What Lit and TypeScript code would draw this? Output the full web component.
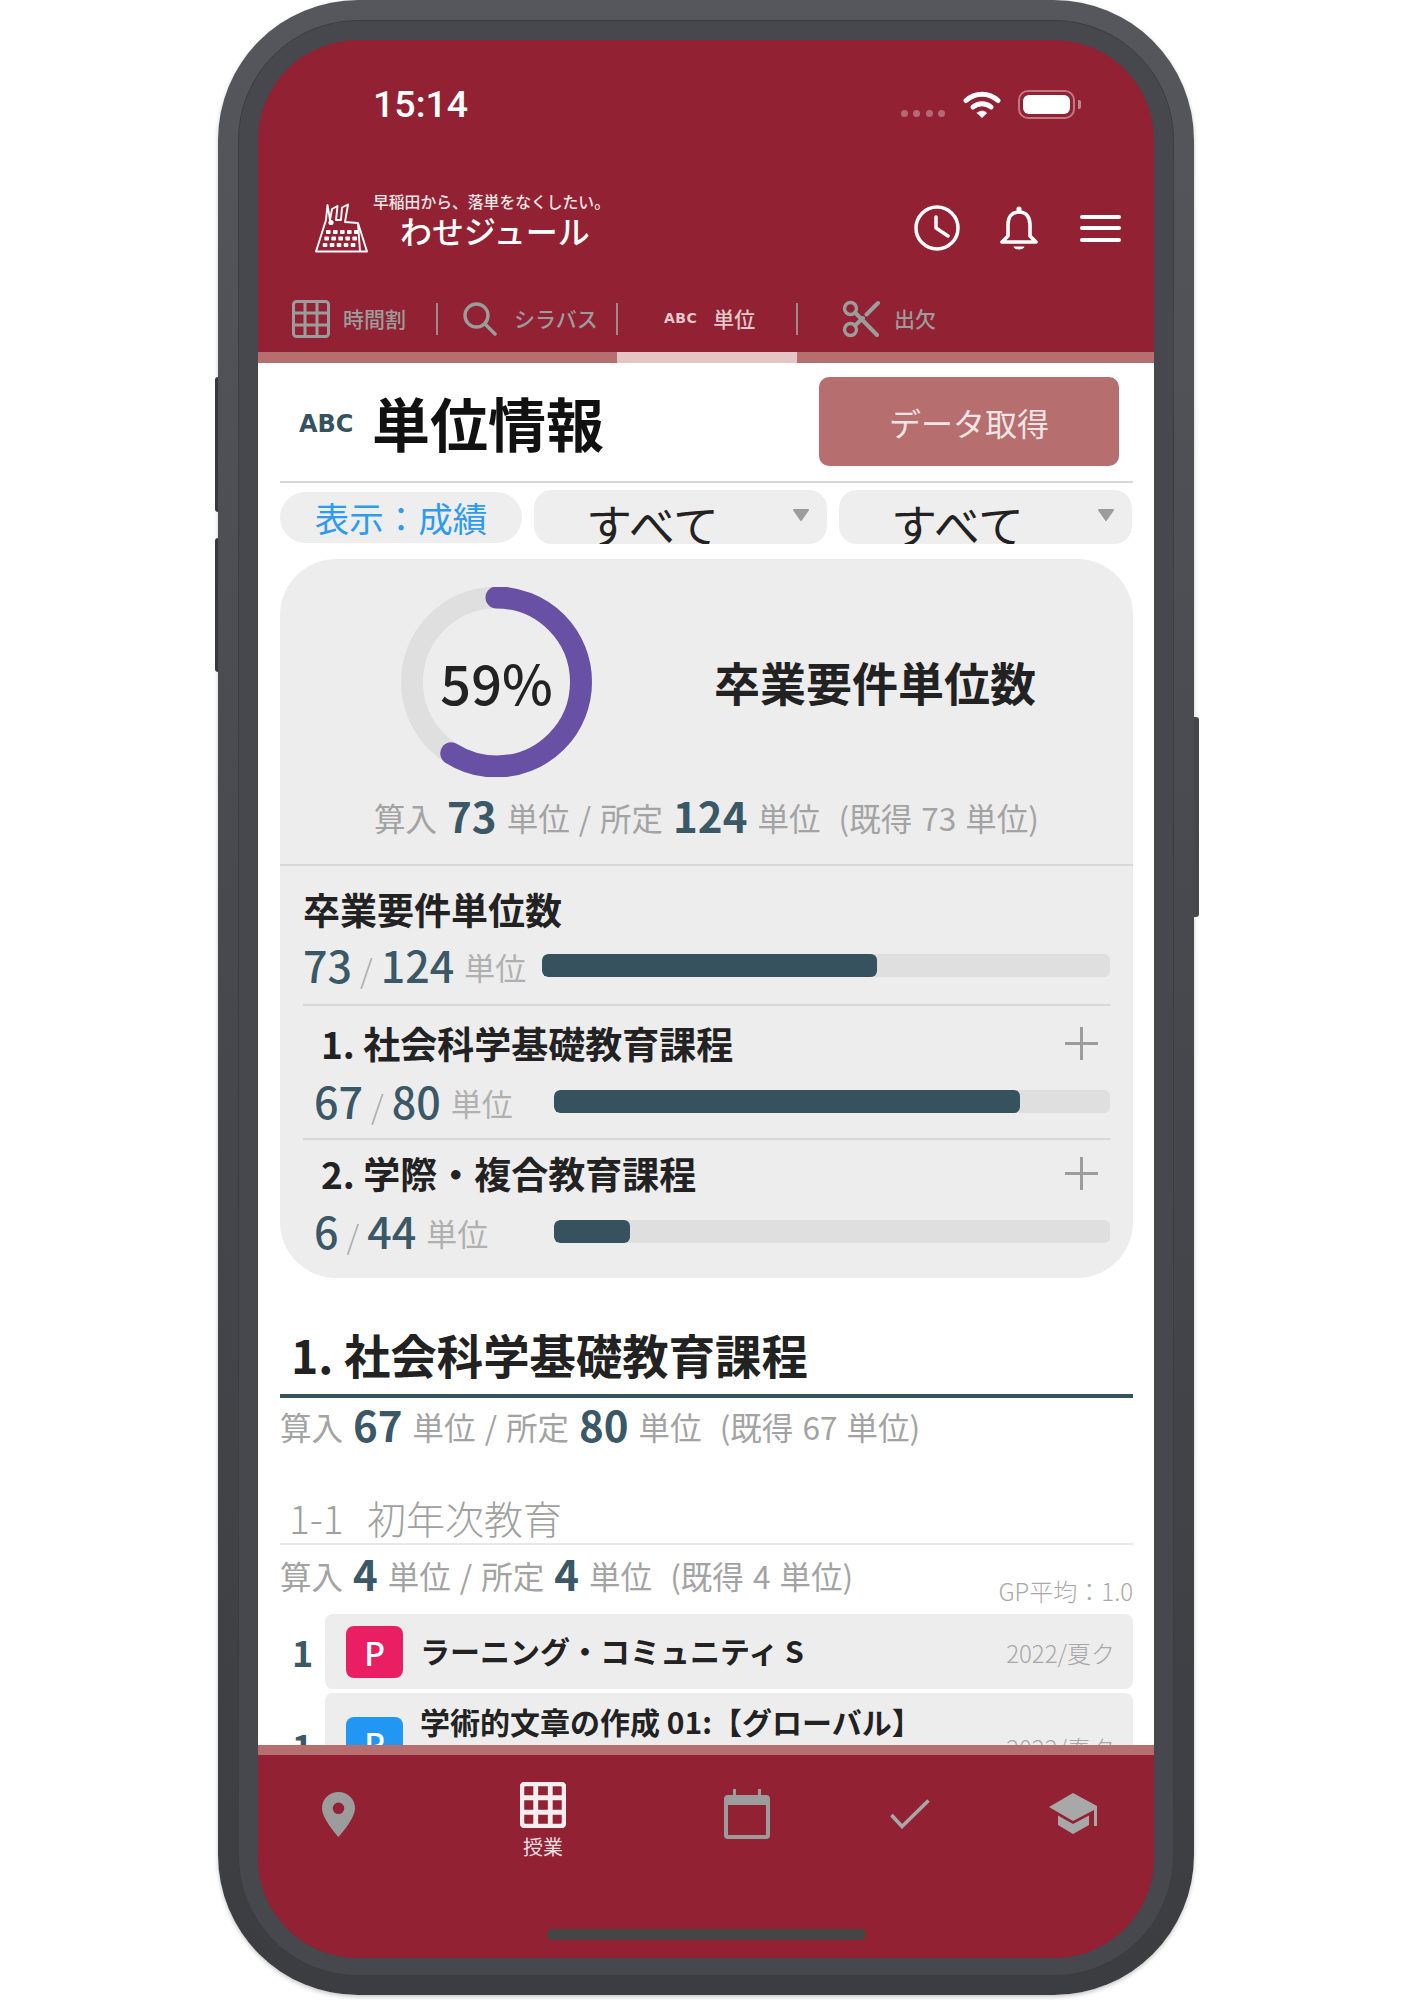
import { LitElement, html, css, svg } from "lit";
import { customElement } from "lit/decorators.js";

const gridIcon = (size: number, color: string, sw: number) => html`<svg width=${size} height=${size} viewBox="0 0 38 38" fill="none" stroke=${color} stroke-width=${sw}>
  <rect x="1.5" y="1.5" width="35" height="35" rx="3"/>
  <path d="M13 1.5V36.5M25 1.5V36.5M1.5 13H36.5M1.5 25H36.5"/></svg>`;

@customElement("app-root")
export class AppRoot extends LitElement {
  static styles = css`
    :host { display: block; width: 1414px; height: 2000px; background: #fff; font-family: "Noto Sans CJK JP", "Noto Sans", sans-serif; color: #222; overflow: hidden; }
    * { box-sizing: border-box; }
    svg { display: block; flex: none; }
    .frame { position: relative; margin-left: 218px; width: 976px; height: 1995px; padding: 20px 20px 19px 20px; border-radius: 140px; background: linear-gradient(180deg, #55575c, #46484d 50%, #3b3d41); box-shadow: 0 2px 4px rgba(0,0,0,.22); }
    .btn { position: absolute; background: #37393d; }
    .b1 { left: -3px; top: 377px; width: 3px; height: 135px; border-radius: 3px 0 0 3px; }
    .b2 { left: -3px; top: 538px; width: 3px; height: 134px; border-radius: 3px 0 0 3px; }
    .b3 { right: -5px; top: 717px; width: 5px; height: 200px; border-radius: 0 3px 3px 0; background: #45474b; }
    .ring { height: 100%; padding: 19px 19px 17px 19px; border: 1px solid #3b3d41; border-radius: 120px; background: #46484d; }
    .screen { height: 100%; border-radius: 100px; overflow: hidden; background: #922233; display: flex; flex-direction: column; }

    .status { height: 130px; flex: none; display: flex; align-items: center; justify-content: space-between; padding: 0 73px 0 115px; }
    .time { color: #fff; font: 500 37.5px/1 Roboto, sans-serif; }
    .sys { display: flex; align-items: flex-start; margin-top: -2px; }
    .dots { display: flex; gap: 5.4px; margin-top: 20px; margin-right: 18px; }
    .dots i { width: 7px; height: 7px; border-radius: 50%; background: rgba(255,255,255,.32); }
    .wifi { margin-right: 17px; }
    .batt { width: 57px; height: 29px; border: 2px solid rgba(255,255,255,.4); border-radius: 10px; padding: 3px; }
    .batt b { display: block; height: 100%; background: #fff; border-radius: 6px; }
    .nub { width: 3px; height: 9px; margin: 10px 0 0 3px; background: rgba(255,255,255,.45); border-radius: 0 2px 2px 0; }

    .hdr { height: 116px; flex: none; display: flex; align-items: center; justify-content: space-between; padding: 0 33px 0 57px; }
    .brand { display: flex; align-items: center; gap: 5px; }
    .brandtxt { display: flex; flex-direction: column; color: #fff; margin-top: -14px; }
    .tag { font-size: 15.8px; line-height: 18px; font-weight: 500; color: #f2e6e6; white-space: nowrap; }
    .name { font-size: 32px; line-height: 40px; font-weight: 500; padding-left: 27px; margin-top: -1px; white-space: nowrap; }
    .acts { display: flex; align-items: center; gap: 40px; }
    .burger { width: 41px; display: flex; flex-direction: column; gap: 7.5px; margin-left: 2px; }
    .burger i { height: 4px; background: #fff; border-radius: 2px; }

    .tabs { height: 66px; flex: none; display: flex; align-items: center; }
    .tab { width: 180px; height: 32px; display: flex; align-items: center; color: #9c9c9c; font-size: 21px; font-weight: 500; white-space: nowrap; }
    .tab span { margin-top: -2px; }
    .tab.sep { border-right: 2px solid #9c8a8d; }
    .t1 { padding-left: 34px; gap: 13px; }
    .t2 { padding-left: 25px; gap: 17px; }
    .t3 { padding-left: 46px; gap: 16px; color: #e3c9cb; }
    .t4 { padding-left: 44px; gap: 14px; }
    .abcs { font: 700 14px/1 "DejaVu Sans", sans-serif; letter-spacing: .5px; }
    .strip { flex: none; height: 11px; display: flex; background: #b76e6f; }
    .strip i { width: 180px; margin-left: 359px; background: #e3c5c6; }

    .content { flex: 1; min-height: 0; overflow: hidden; background: #fff; padding: 0 21px 0 22px; }
    .titlerow { height: 120px; display: flex; align-items: flex-start; border-bottom: 2px solid #d9d6de; padding: 14px 14px 0 19px; }
    .abc { font: 700 24px/1 "DejaVu Sans", sans-serif; color: #36525f; margin-top: 35px; width: 73px; }
    h1 { margin: 3px 0 0; font-size: 58px; line-height: 84px; font-weight: 700; color: #111; flex: 1; }
    .get { width: 300px; height: 89px; border-radius: 10px; background: #b76e6f; color: #f0e4e4; font-size: 32px; display: flex; align-items: center; justify-content: center; }
    .filters { display: flex; height: 54px; margin-top: 7px; gap: 12px; align-items: center; }
    .pill { width: 242px; height: 51px; border-radius: 26px; background: #eee; color: #2f9bf0; font-size: 34.5px; line-height: 51px; text-align: center; white-space: nowrap; }
    .sel { width: 293px; height: 54px; border-radius: 18px; background: #eee; display: flex; align-items: center; justify-content: space-between; padding: 0 17px 0 52px; overflow: hidden; }
    .sel span { font-size: 46px; line-height: 54px; margin-top: 11px; color: #222; }
    .sel svg { margin-bottom: 4px; }

    .card { margin-top: 15px; height: 719px; border-radius: 56px; background: #ededed; overflow: hidden; }
    .donutrow { display: flex; align-items: center; height: 190px; padding-left: 120px; gap: 121px; }
    .donut { position: relative; width: 193px; height: 190px; }
    .pct { position: absolute; inset: 0; display: flex; align-items: center; justify-content: center; font-size: 54px; font-weight: 500; color: #222; padding-bottom: 2px; }
    .bighead { font-size: 46px; font-weight: 700; color: #222; white-space: nowrap; margin-top: -2px; }
    .stats { font-size: 31.5px; line-height: 50px; color: #a3a3a3; white-space: nowrap; word-spacing: 2px; }
    .stats b { font-size: 42px; line-height: 1; font-weight: 700; color: #3a5866; margin: 0 10px; vertical-align: -2px; }
    .center { text-align: center; }
    .top { padding-top: 28px; height: 307px; border-bottom: 2px solid #d9d6de; }
    .top .stats { margin-top: 15px; }
    .goal { padding: 18px 23px 0; }
    .h3 { font-size: 37px; line-height: 50px; font-weight: 700; color: #222; display: flex; justify-content: space-between; align-items: center; white-space: nowrap; }
    .prog { height: 44px; margin-top: 12px; display: flex; align-items: center; }
    .val { font-size: 43px; font-weight: 500; color: #3a5866; line-height: 44px; white-space: nowrap; flex: none; margin-top: -3px; }
    .val s { text-decoration: none; font-size: 32px; font-weight: 300; color: #aaa; margin: 0 8px; }
    .val u { text-decoration: none; font-size: 31px; font-weight: 400; color: #b0b0b0; margin-left: 10px; vertical-align: 3px; }
    .bar { height: 23px; background: #dfdfdf; border-radius: 6px; overflow: hidden; margin-bottom: 5px; margin-left: auto; }
    .bar i { display: block; height: 100%; background: #36525f; border-radius: 6px; }
    .w1 { width: 568px; }
    .w2 { width: 556px; }
    .item { border-top: 2px solid #d9d6de; padding-top: 10px; }
    .first { margin-top: 14px; padding-top: 14px; }
    .item .h3 { padding: 0 12px 0 18px; margin-top: -2px; }
    .item .prog { padding-left: 11px; margin-top: 14px; }
    .item + .item { margin-top: 12px; }

    .sech { margin-top: 46px; padding: 0 0 10px 11px; font-size: 46.4px; line-height: 60px; font-weight: 700; color: #222; border-bottom: 4px solid #36525f; white-space: nowrap; }
    .s2 { margin-top: 3px; }
    .subh { margin-top: 41px; padding: 0 0 1px 9px; font-size: 39px; line-height: 50px; font-weight: 300; color: #a0a0a0; border-bottom: 2px solid #e8e8e8; white-space: pre; word-spacing: 3px; }
    .s3 { display: flex; justify-content: space-between; align-items: flex-end; margin-top: 5px; }
    .gp { font-size: 24px; line-height: 22px; font-weight: 300; color: #a8a8a8; margin-bottom: -2px; }
    .row { display: flex; align-items: center; }
    .r1 { margin-top: 14px; height: 75px; }
    .r2 { margin-top: 4px; height: 100px; }
    .num { width: 45px; text-align: center; font-size: 36px; font-weight: 700; color: #3a5866; flex: none; margin-top: -2px; }
    .rc { flex: 1; height: 100%; background: #ededed; border-radius: 8px; display: flex; align-items: center; padding: 0 18px 0 21px; }
    .badge { width: 57px; height: 52px; flex: none; border-radius: 8px; color: #fff; font-size: 32px; font-weight: 500; display: flex; align-items: center; justify-content: center; margin-right: 17px; }
    .pk { background: #e91e63; }
    .bl { background: #2196f3; }
    .rt { font-size: 30px; line-height: 40px; font-weight: 700; color: #222; white-space: nowrap; flex: 1; margin-bottom: 4px; }
    .r2 .rt { align-self: flex-start; margin: 8px 0 0; }
    .dt { font-size: 24px; font-weight: 300; color: #a8a8a8; white-space: nowrap; margin-top: 2px; }
    .r2 .dt { margin-top: 8px; }
    .r2 .num { margin-top: 4px; }

    .foot { flex: none; height: 213px; border-top: 10px solid #b76e6f; background: #922233; display: flex; flex-direction: column; }
    .nav { display: grid; grid-template-columns: 160px 250px 158px 168px 160px; }
    .nv { display: flex; flex-direction: column; align-items: center; }
    .n1 { padding-top: 37px; }
    .n2 { padding-top: 27px; }
    .n3 { padding-top: 34px; }
    .n4 { padding-top: 44px; }
    .n5 { padding-top: 38px; }
    .lab { font-size: 20px; line-height: 24px; margin-top: 7px; color: #eadfe0; }
    .home { margin: auto auto 18px; width: 319px; height: 11px; border-radius: 6px; background: #454545; }
  `;

  private stats(a: string, b: string, c: string) {
    return html`算入<b>${a}</b>単位 / 所定<b>${b}</b>単位 &nbsp;(既得 ${c} 単位)`;
  }

  private prog(a: string, b: string, pct: number, cls: string) {
    return html`<div class="prog">
      <div class="val">${a}<s>/</s>${b}<u>単位</u></div>
      <div class="bar ${cls}"><i style="width:${pct}%"></i></div>
    </div>`;
  }

  private plus() {
    return html`<svg width="33" height="33" viewBox="0 0 33 33" stroke="#9c9c9c" stroke-width="3"><path d="M16.5 0V33M0 16.5H33"/></svg>`;
  }

  private arrow() {
    return html`<svg width="18" height="12" viewBox="0 0 18 12"><path d="M2 1H16L9 11Z" fill="#9c9c9c" stroke="#9c9c9c" stroke-width="2" stroke-linejoin="round"/></svg>`;
  }

  private logo() {
    const dots = [];
    for (const y of [27, 33.5, 40]) {
      for (const x of [11, 18, 25, 32, 39]) {
        dots.push(svg`<rect x=${x - (y - 27) * 0.25} y=${y} width="4.6" height="4" rx=".8"/>`);
      }
    }
    return html`<svg width="53" height="50" viewBox="0 0 53 50">
      <g fill="none" stroke="#fff" stroke-width="1.9" stroke-linejoin="round">
        <path d="M1 48.5H52L43 20L30 19L33 1.5L27 4.5L26 17L21 17L22.5 3L17 6L15 17L12.5 2L11 17Z"/>
        <path d="M43 20L45 48.5"/>
      </g>
      <circle cx="16" cy="19.5" r="2.6" fill="#fff"/>
      <g fill="#fff">${dots}</g>
    </svg>`;
  }

  render() {
    return html`
      <div class="frame">
        <div class="btn b1"></div><div class="btn b2"></div><div class="btn b3"></div>
        <div class="ring"><div class="screen">
          <div class="status">
            <div class="time">15:14</div>
            <div class="sys">
              <div class="dots"><i></i><i></i><i></i><i></i></div>
              <svg class="wifi" width="38" height="29" viewBox="0 0 38 29" fill="none" stroke="#fff" stroke-width="5" stroke-linecap="round">
                <path d="M3 10.5C12 2 26 2 35 10.5"/>
                <path d="M10 17C15 12.5 23 12.5 28 17"/>
                <path d="M14.5 23L19 27.5L23.5 23C21 20.5 17 20.5 14.5 23Z" fill="#fff" stroke-width="1" stroke-linejoin="round"/>
              </svg>
              <div class="batt"><b></b></div>
              <div class="nub"></div>
            </div>
          </div>

          <div class="hdr">
            <div class="brand">
              ${this.logo()}
              <div class="brandtxt">
                <div class="tag">早稲田から、落単をなくしたい。</div>
                <div class="name">わせジュール</div>
              </div>
            </div>
            <div class="acts">
              <svg width="46" height="46" viewBox="0 0 46 46" fill="none" stroke="#fff" stroke-width="3.5" stroke-linecap="round" stroke-linejoin="round">
                <circle cx="23" cy="23" r="21"/><path d="M22 12V23L34 31"/>
              </svg>
              <svg width="38" height="45" viewBox="0 0 38 45" fill="none" stroke="#fff" stroke-width="3.6" stroke-linejoin="round">
                <path d="M19 6C11 6 8 12 8 19V30L2 36H36L30 30V19C30 12 27 6 19 6Z"/>
                <circle cx="19" cy="3" r="2.6" fill="#fff" stroke="none"/>
                <path d="M13.5 40.5H24.5C24 44.5 14 44.5 13.5 40.5Z" fill="#fff" stroke="none"/>
              </svg>
              <div class="burger"><i></i><i></i><i></i></div>
            </div>
          </div>

          <div class="tabs">
            <div class="tab sep t1">${gridIcon(38, "#9c9c9c", 3)}<span>時間割</span></div>
            <div class="tab sep t2">
              <svg width="34" height="34" viewBox="0 0 34 34" fill="none" stroke="#9c9c9c" stroke-width="3.4" stroke-linecap="round"><circle cx="13.5" cy="13.5" r="11.5"/><path d="M22 22L32 32"/></svg>
              <span>シラバス</span>
            </div>
            <div class="tab sep t3"><span class="abcs">ABC</span><span>単位</span></div>
            <div class="tab t4">
              <svg width="38" height="38" viewBox="0 0 38 38" fill="none" stroke="#9c9c9c" stroke-linecap="round">
                <circle cx="8.5" cy="8.5" r="6" stroke-width="3.4"/><circle cx="8.5" cy="29.5" r="6" stroke-width="3.4"/>
                <path d="M13 12.5L35 35" stroke-width="4"/><path d="M13 25.5L21 18M24.5 14.5L36 3" stroke-width="4"/>
              </svg>
              <span>出欠</span>
            </div>
          </div>
          <div class="strip"><i></i></div>

          <div class="content">
            <div class="titlerow">
              <div class="abc">ABC</div>
              <h1>単位情報</h1>
              <div class="get">データ取得</div>
            </div>
            <div class="filters">
              <div class="pill">表示：成績</div>
              <div class="sel"><span>すべて</span>${this.arrow()}</div>
              <div class="sel"><span>すべて</span>${this.arrow()}</div>
            </div>

            <div class="card">
              <div class="top">
                <div class="donutrow">
                  <div class="donut">
                    <svg width="193" height="190" viewBox="0 0 193 190" fill="none" stroke-width="22">
                      <circle cx="96.5" cy="95" r="84.5" stroke="#dfdfdf"/>
                      <circle cx="96.5" cy="95" r="84.5" stroke="#6850a4" stroke-linecap="round" pathLength="100" stroke-dasharray="59 100" transform="rotate(-90 96.5 95)"/>
                    </svg>
                    <div class="pct">59%</div>
                  </div>
                  <div class="bighead">卒業要件単位数</div>
                </div>
                <div class="stats center">${this.stats("73", "124", "73")}</div>
              </div>
              <div class="goal">
                <div class="h3">卒業要件単位数</div>
                ${this.prog("73", "124", 58.9, "w1")}
                <div class="item first">
                  <div class="h3"><span>1. 社会科学基礎教育課程</span>${this.plus()}</div>
                  ${this.prog("67", "80", 83.75, "w2")}
                </div>
                <div class="item">
                  <div class="h3"><span>2. 学際・複合教育課程</span>${this.plus()}</div>
                  ${this.prog("6", "44", 13.6, "w2")}
                </div>
              </div>
            </div>

            <div class="sech">1. 社会科学基礎教育課程</div>
            <div class="stats s2">${this.stats("67", "80", "67")}</div>
            <div class="subh">1-1  初年次教育</div>
            <div class="s3">
              <div class="stats">${this.stats("4", "4", "4")}</div>
              <div class="gp">GP平均：1.0</div>
            </div>
            <div class="row r1">
              <div class="num">1</div>
              <div class="rc"><div class="badge pk">P</div><div class="rt">ラーニング・コミュニティ S</div><div class="dt">2022/夏ク</div></div>
            </div>
            <div class="row r2">
              <div class="num">1</div>
              <div class="rc"><div class="badge bl">P</div><div class="rt">学術的文章の作成 01:【グローバル】</div><div class="dt">2022/春ク</div></div>
            </div>
          </div>

          <div class="foot">
            <div class="nav">
              <div class="nv n1"><svg width="33" height="45" viewBox="0 0 33 45"><path fill-rule="evenodd" fill="#9c9c9c" d="M16.5 0C7.4 0 0 7.2 0 16.2C0 27 16.5 45 16.5 45S33 27 33 16.2C33 7.2 25.6 0 16.5 0ZM16.5 10.5A5.8 5.8 0 1 1 16.5 22.1A5.8 5.8 0 1 1 16.5 10.5Z"/></svg></div>
              <div class="nv n2">${gridIcon(46, "#f6eeee", 4)}<div class="lab">授業</div></div>
              <div class="nv n3"><svg width="46" height="50" viewBox="0 0 46 50" fill="none"><path d="M9 0H12V6H34V0H37V6H42A4 4 0 0 1 46 10V46A4 4 0 0 1 42 50H4A4 4 0 0 1 0 46V10A4 4 0 0 1 4 6H9Z" fill="#9c9c9c"/><rect x="4" y="16" width="38" height="30" fill="#922233"/></svg></div>
              <div class="nv n4"><svg width="40" height="30" viewBox="0 0 40 30" fill="none" stroke="#a8a8a8" stroke-width="3.6"><path d="M1.5 16L12 27.5L38.5 1.5"/></svg></div>
              <div class="nv n5"><svg width="51" height="41" viewBox="0 0 51 41" fill="#a8a8a8"><path d="M24 0L48 13V33H45V17L24 28L0 14Z"/><path d="M9 22.5L24 31L40 22.5V32L24 41L9 32Z"/></svg></div>
            </div>
            <div class="home"></div>
          </div>
        </div></div>
      </div>
    `;
  }
}
